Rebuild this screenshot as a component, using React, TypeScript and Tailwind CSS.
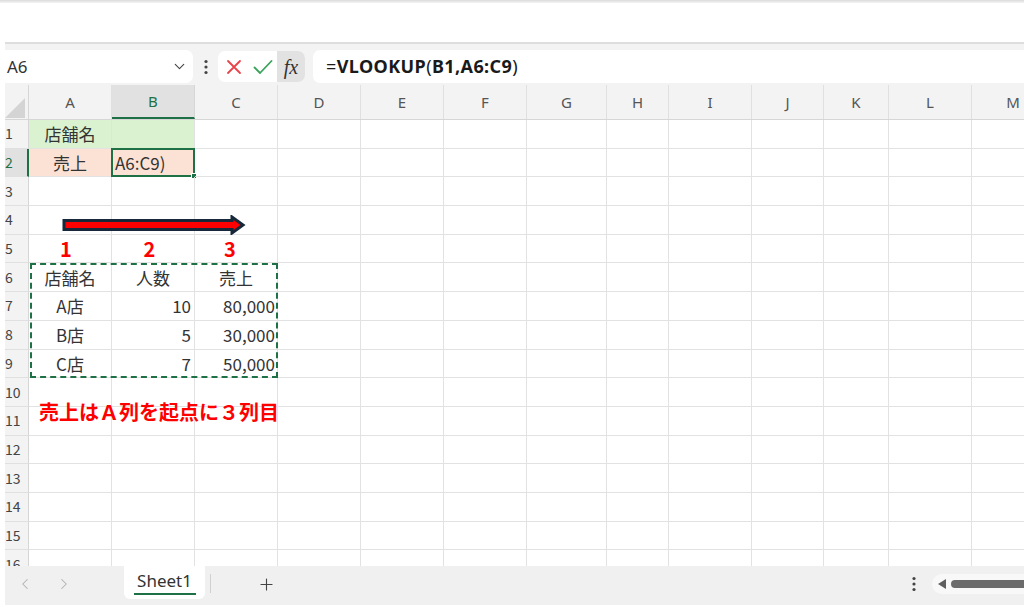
import { ChevronDown, ChevronLeft, ChevronRight, Plus } from "lucide-react";

// column letters + pixel widths read off the screenshot
const COLS = [
    { l: "A", w: "w-[83px]" },
    { l: "B", w: "w-[83px]" },
    { l: "C", w: "w-[83px]" },
    { l: "D", w: "w-[83px]" },
    { l: "E", w: "w-[83px]" },
    { l: "F", w: "w-[83px]" },
    { l: "G", w: "w-[80px]" },
    { l: "H", w: "w-[62px]" },
    { l: "I", w: "w-[83px]" },
    { l: "J", w: "w-[72px]" },
    { l: "K", w: "w-[65px]" },
    { l: "L", w: "w-[83px]" },
    { l: "M", w: "w-[83px]" },
];

type Cell = { text: string; cls?: string };

const CELLS: Record<string, Cell> = {
    A1: { text: "店舗名", cls: "bg-[#daf2d0] justify-center" },
    B1: { text: "", cls: "bg-[#daf2d0]" },
    A2: { text: "売上", cls: "bg-[#fbe2d5] justify-center" },
    B2: { text: "A6:C9)", cls: "bg-[#fbe2d5] justify-start pl-[3px]" },
    A5: { text: "1", cls: "justify-center pr-[8px] text-[#ff0000] font-bold text-[20px]" },
    B5: { text: "2", cls: "justify-center pr-[7px] text-[#ff0000] font-bold text-[20px]" },
    C5: { text: "3", cls: "justify-center pr-[12px] text-[#ff0000] font-bold text-[20px]" },
    A6: { text: "店舗名", cls: "justify-center" },
    B6: { text: "人数", cls: "justify-center" },
    C6: { text: "売上", cls: "justify-center" },
    A7: { text: "A店", cls: "justify-center" },
    B7: { text: "10", cls: "justify-end pr-[3px]" },
    C7: { text: "80,000", cls: "justify-end pr-[2px]" },
    A8: { text: "B店", cls: "justify-center" },
    B8: { text: "5", cls: "justify-end pr-[3px]" },
    C8: { text: "30,000", cls: "justify-end pr-[2px]" },
    A9: { text: "C店", cls: "justify-center" },
    B9: { text: "7", cls: "justify-end pr-[3px]" },
    C9: { text: "50,000", cls: "justify-end pr-[2px]" },
};

const ROWS = Array.from({ length: 16 }, (_, i) => i + 1);

function Dots() {
    return (
        <svg width="4" height="16" viewBox="0 0 4 16">
            <circle cx="2" cy="2.5" r="1.6" fill="#444" />
            <circle cx="2" cy="8" r="1.6" fill="#444" />
            <circle cx="2" cy="13.5" r="1.6" fill="#444" />
        </svg>
    );
}

function FormulaBar() {
    return (
        <div className="flex items-start gap-0 bg-[#f3f3f3] border-t-2 border-[#dedede] pt-[6px] h-[43px]">
            {/* name box */}
            <div className="w-[188px] h-[33px] bg-white rounded-r-[7px] flex items-center justify-between pl-[2px] pr-[5px]">
                <span className="text-[17px] text-[#333]">A6</span>
                <ChevronDown size={17} strokeWidth={1.6} className="text-[#444]" />
            </div>
            <div className="w-[25px] h-[33px] flex items-center justify-center">
                <Dots />
            </div>
            {/* cancel / enter / fx */}
            <div className="w-[87px] h-[31px] mt-[1px] bg-white rounded-[7px] flex items-center pl-[8px]">
                <svg width="16" height="16" viewBox="0 0 16 16" className="mr-[11px]">
                    <path d="M2 2 L14 14 M14 2 L2 14" stroke="#e8434a" strokeWidth="1.8" strokeLinecap="round" />
                </svg>
                <svg width="20" height="16" viewBox="0 0 20 16" className="mr-[4px]">
                    <path d="M1.5 8.5 L7 14 L18.5 2" stroke="#3aa35a" strokeWidth="1.8" fill="none" strokeLinecap="round" strokeLinejoin="round" />
                </svg>
                <div className="w-[28px] h-[31px] bg-[#e2e2e2] rounded-r-[7px] flex items-center justify-center">
                    <span className="font-['Liberation_Serif',serif] italic text-[20px] text-[#333] leading-none">fx</span>
                </div>
            </div>
            {/* formula input */}
            <div className="flex-1 ml-[8px] h-[33px] bg-white rounded-l-[7px] flex items-center pl-[13px]">
                <span className="text-[18px] text-[#1a1a1a] tracking-[0.4px]">
                    =<b className="font-bold">VLOOKUP</b>(<b className="font-bold">B1,A6:C9</b>)
                </span>
            </div>
        </div>
    );
}

function HeaderRow() {
    return (
        <div className="flex h-[35px] bg-[#f3f3f3] border-b border-[#d6d6d6]">
            <div className="w-[24px] shrink-0 border-r border-[#d6d6d6] flex items-end justify-end pb-[1px] pr-[3px]">
                <svg width="20" height="20" viewBox="0 0 20 20">
                    <path d="M20 0 L20 20 L0 20 Z" fill="#d4d4d4" />
                </svg>
            </div>
            {COLS.map((c) =>
                c.l === "B" ? (
                    <div
                        key={c.l}
                        className={`${c.w} shrink-0 bg-[#e1e1e1] border-r border-[#d6d6d6] border-b-2 border-b-[#1e7145] flex items-center justify-center text-[15px] text-[#1e7145]`}
                    >
                        {c.l}
                    </div>
                ) : (
                    <div
                        key={c.l}
                        className={`${c.w} shrink-0 border-r border-[#e0e0e0] flex items-center justify-center text-[15px] text-[#555]`}
                    >
                        {c.l}
                    </div>
                )
            )}
        </div>
    );
}

function GridRow({ r }: { r: number }) {
    const selRow = r === 2;
    return (
        <div className="flex h-[28.7px] shrink-0">
            <div
                className={
                    selRow
                        ? "w-[24px] shrink-0 bg-[#e1e1e1] border-r-2 border-[#1e7145] border-b border-b-[#e0e0e0] flex items-center text-[14px] text-[#1e7145]"
                        : "w-[24px] shrink-0 bg-[#f3f3f3] border-r border-[#d6d6d6] border-b border-b-[#e0e0e0] flex items-center text-[14px] text-[#444]"
                }
            >
                {r}
            </div>
            {COLS.map((c) => {
                const key = `${c.l}${r}`;
                const cell = CELLS[key];
                return (
                    <div
                        key={key}
                        className={`${c.w} shrink-0 relative border-r border-b border-[#e2e2e2] flex items-center text-[17px] text-[#333] whitespace-nowrap ${cell?.cls ?? ""}`}
                    >
                        {cell?.text}
                        {key === "B2" && (
                            <div className="absolute -left-px -top-px -right-px -bottom-px border-2 border-[#1e7145]">
                                <div className="absolute -right-[4px] -bottom-[4px] w-[6px] h-[6px] bg-[#1e7145] border border-white" />
                            </div>
                        )}
                    </div>
                );
            })}
        </div>
    );
}

function SheetTabs() {
    return (
        <div className="h-[39px] shrink-0 bg-[#f0f0f0] flex items-start">
            <div className="w-[39px] h-[36px] flex items-center justify-center">
                <ChevronLeft size={18} strokeWidth={1.4} className="text-[#b0b0b0]" />
            </div>
            <div className="w-[39px] h-[36px] flex items-center justify-center">
                <ChevronRight size={18} strokeWidth={1.4} className="text-[#b0b0b0]" />
            </div>
            <div className="ml-[41px] w-[81px] h-[33px] bg-white rounded-b-[6px] flex flex-col items-center justify-center">
                <span className="text-[17px] text-[#333] leading-none mt-[1px]">Sheet1</span>
                <div className="w-[62px] h-[2px] bg-[#1e7145] mt-[4px]" />
            </div>
            <div className="ml-[5px] mt-[8px] w-px h-[19px] bg-[#d0d0d0]" />
            <div className="ml-[46px] h-[36px] flex items-center">
                <Plus size={19} strokeWidth={1.4} className="text-[#444]" />
            </div>
            <div className="flex-1" />
            <div className="h-[36px] flex items-center mr-[16px]">
                <Dots />
            </div>
            <div className="mt-[8px] h-[20px] w-[92px] bg-[#f8f8f8] rounded-l-full flex items-center pl-[6px]">
                <svg width="8" height="10" viewBox="0 0 8 10">
                    <path d="M8 0 L0 5 L8 10 Z" fill="#5e5e5e" />
                </svg>
                <div className="ml-[5px] flex-1 h-[8px] bg-[#6b6b6b] rounded-l-full" />
            </div>
        </div>
    );
}

export default function App() {
    return (
        <div className="relative w-[1024px] h-[605px] overflow-hidden bg-white font-['Noto_Sans','Noto_Sans_CJK_JP',sans-serif]">
            <div className="h-[3px] bg-gradient-to-b from-[#dcdcdc] to-[#f4f4f4]" />
            <div className="h-[39px] bg-white" />
            <div className="flex flex-col h-[563px] pl-[5px]">
                <FormulaBar />
                <HeaderRow />
                <div className="flex-1 flex flex-col overflow-hidden font-['Noto_Sans_CJK_JP',sans-serif]">
                    {ROWS.map((r) => (
                        <GridRow key={r} r={r} />
                    ))}
                </div>
                <SheetTabs />
            </div>

            {/* arrow shape sitting on row 4 */}
            <svg className="absolute left-[62px] top-[215px]" width="184" height="20" viewBox="0 0 184 20">
                <polygon
                    points="2,5.5 170,5.5 170,2 181,10 170,18 170,14.5 2,14.5"
                    fill="#ff0000"
                    stroke="#17283a"
                    strokeWidth="3"
                    strokeLinejoin="miter"
                />
            </svg>

            {/* copy range marquee A6:C9 */}
            <div className="absolute left-[30px] top-[263px] w-[248px] h-[115px] border-2 border-dashed border-[#1e7145]" />

            {/* note text box */}
            <div className="absolute left-[39px] top-[397px] text-[20px] font-bold text-[#ff0000] whitespace-nowrap font-['Noto_Sans_CJK_JP',sans-serif]">
                売上はＡ列を起点に３列目
            </div>
        </div>
    );
}
